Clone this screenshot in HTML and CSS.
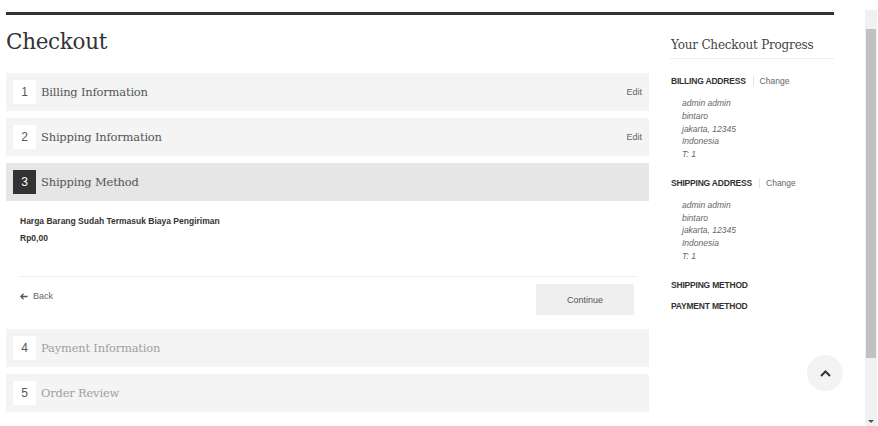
FILE: index.html
```html
<!DOCTYPE html>
<html>
<head>
    <title>Checkout</title>
    <link rel="stylesheet" href="styles.css">
</head>
<body>
    <div class="page">
        <div class="top-rule"></div>
        <div class="layout">
            <div class="checkout">
                <h1>Checkout</h1>

                <div class="step">
                    <div class="step-head">
                        <span class="step-num">1</span>
                        <span class="step-title">Billing Information</span>
                        <a class="step-edit">Edit</a>
                    </div>
                </div>

                <div class="step">
                    <div class="step-head">
                        <span class="step-num">2</span>
                        <span class="step-title">Shipping Information</span>
                        <a class="step-edit">Edit</a>
                    </div>
                </div>

                <div class="step active">
                    <div class="step-head">
                        <span class="step-num">3</span>
                        <span class="step-title">Shipping Method</span>
                    </div>
                    <div class="step-body">
                        <div class="shipping-note">
                            <p>Harga Barang Sudah Termasuk Biaya Pengiriman</p>
                            <p>Rp0,00</p>
                        </div>
                        <div class="step-actions">
                            <a class="back-link">
                                <svg width="8" height="7" viewBox="0 0 8 7"><path d="M3.5 0.8 L0.8 3.5 L3.5 6.2 M0.8 3.5 H7.6" fill="none" stroke="#555" stroke-width="1.3"/></svg>
                                Back
                            </a>
                            <button class="btn-continue">Continue</button>
                        </div>
                    </div>
                </div>

                <div class="step disabled">
                    <div class="step-head">
                        <span class="step-num">4</span>
                        <span class="step-title">Payment Information</span>
                    </div>
                </div>

                <div class="step disabled">
                    <div class="step-head">
                        <span class="step-num">5</span>
                        <span class="step-title">Order Review</span>
                    </div>
                </div>
            </div>

            <div class="progress">
                <h2>Your Checkout Progress</h2>

                <div class="progress-item">
                    <div class="progress-label">BILLING ADDRESS <span class="sep"></span><a class="change">Change</a></div>
                    <address>
                        admin admin<br>
                        bintaro<br>
                        jakarta, 12345<br>
                        Indonesia<br>
                        T: 1
                    </address>
                </div>

                <div class="progress-item">
                    <div class="progress-label">SHIPPING ADDRESS <span class="sep"></span><a class="change">Change</a></div>
                    <address>
                        admin admin<br>
                        bintaro<br>
                        jakarta, 12345<br>
                        Indonesia<br>
                        T: 1
                    </address>
                </div>

                <div class="progress-item short">
                    <div class="progress-label">SHIPPING METHOD</div>
                </div>
                <div class="progress-item short">
                    <div class="progress-label">PAYMENT METHOD</div>
                </div>
            </div>
        </div>
    </div>

    <div class="scrollbar">
        <div class="scroll-thumb"></div>
        <div class="scroll-arrow"></div>
    </div>

    <!-- tombol kembali ke atas -->
    <a class="to-top">
        <svg width="11" height="7" viewBox="0 0 11 7"><path d="M1 6 L5.5 1.5 L10 6" fill="none" stroke="#333" stroke-width="2"/></svg>
    </a>
</body>
</html>
```

FILE: styles.css
```css
body {
    margin: 0;
    height: 426px;
    overflow: hidden;
    display: flex;
    font-family: 'Liberation Sans', Arial, sans-serif;
    color: #333;
    background: #fff;
}

.page {
    width: 828px;
    margin-left: 6px;
    padding-top: 12px;
}

.top-rule {
    height: 3px;
    background: #333;
}

.layout {
    display: grid;
    grid-template-columns: 643px 164px;
    column-gap: 21px;
}

h1 {
    margin: 12px 0 16px;
    font-family: 'DejaVu Serif', Georgia, serif;
    font-weight: normal;
    font-size: 21.5px;
    line-height: 30px;
    color: #333;
    letter-spacing: -0.3px;
}

.step {
    margin-bottom: 7px;
}

.step-head {
    height: 38px;
    display: flex;
    align-items: center;
    padding: 0 7px;
    background: #f4f4f4;
}

.step-num {
    width: 23px;
    height: 24px;
    display: flex;
    align-items: center;
    justify-content: center;
    background: #fff;
    font-size: 12px;
    color: #555;
}

.step-title {
    flex: 1;
    margin-left: 5px;
    font-family: 'DejaVu Serif', Georgia, serif;
    font-size: 11.5px;
    color: #555;
    letter-spacing: -0.2px;
}

.step-edit {
    font-size: 9px;
    color: #666;
}

.step.active .step-head {
    background: #e6e6e6;
}

.step.active .step-num {
    background: #333;
    color: #fff;
}

.step.disabled .step-title {
    color: #a0a0a0;
}

.step-body {
    padding: 12px 13px 7px 14px;
}

.shipping-note {
    margin-bottom: 29px;
}

.shipping-note p {
    margin: 0;
    font-size: 8.5px;
    line-height: 17px;
    font-weight: bold;
    color: #333;
}

.step-actions {
    display: flex;
    align-items: flex-start;
    justify-content: space-between;
    padding-top: 7px;
    border-top: 1px solid #ececec;
}

.back-link {
    display: flex;
    align-items: center;
    gap: 5px;
    margin-top: 7px;
    font-size: 9px;
    color: #666;
}

.btn-continue {
    width: 98px;
    height: 31px;
    margin-right: 2px;
    border: none;
    background: #efefef;
    font-family: 'Liberation Sans', Arial, sans-serif;
    font-size: 9px;
    color: #555;
}

.progress h2 {
    margin: 20px 0 0;
    padding: 0 0 3px 1px;
    font-family: 'DejaVu Serif', Georgia, serif;
    font-weight: normal;
    font-size: 12px;
    line-height: 20px;
    color: #444;
    border-bottom: 1px solid #ececec;
    letter-spacing: -0.2px;
}

.progress-item {
    margin-top: 15px;
    padding-left: 1px;
}

.progress-item.short + .progress-item.short {
    margin-top: 7px;
}

.progress-label {
    display: flex;
    align-items: center;
    font-size: 8.5px;
    line-height: 14px;
    font-weight: bold;
    color: #333;
    letter-spacing: -0.2px;
}

.sep {
    width: 1px;
    height: 10px;
    margin: 0 6px 0 7px;
    background: #e4e4e4;
}

.change {
    font-weight: normal;
    color: #666;
    letter-spacing: 0;
}

address {
    margin: 9px 0 0 11px;
    font-size: 8.5px;
    line-height: 12.75px;
    color: #666;
}

/* scrollbar tiruan di sisi kanan */
.scrollbar {
    width: 12px;
    margin: 10px 1px 0 auto;
    background: #f1f1f1;
    position: relative;
}

.scroll-thumb {
    margin: 19px 1px 0;
    height: 329px;
    background: #c1c1c1;
}

.scroll-arrow {
    position: absolute;
    left: 3px;
    bottom: 3px;
    border-left: 3px solid transparent;
    border-right: 3px solid transparent;
    border-top: 3px solid #555;
}

.to-top {
    position: absolute;
    left: 807px;
    top: 355px;
    width: 36px;
    height: 36px;
    border-radius: 50%;
    background: #f3f3f3;
    display: flex;
    align-items: center;
    justify-content: center;
}
```
